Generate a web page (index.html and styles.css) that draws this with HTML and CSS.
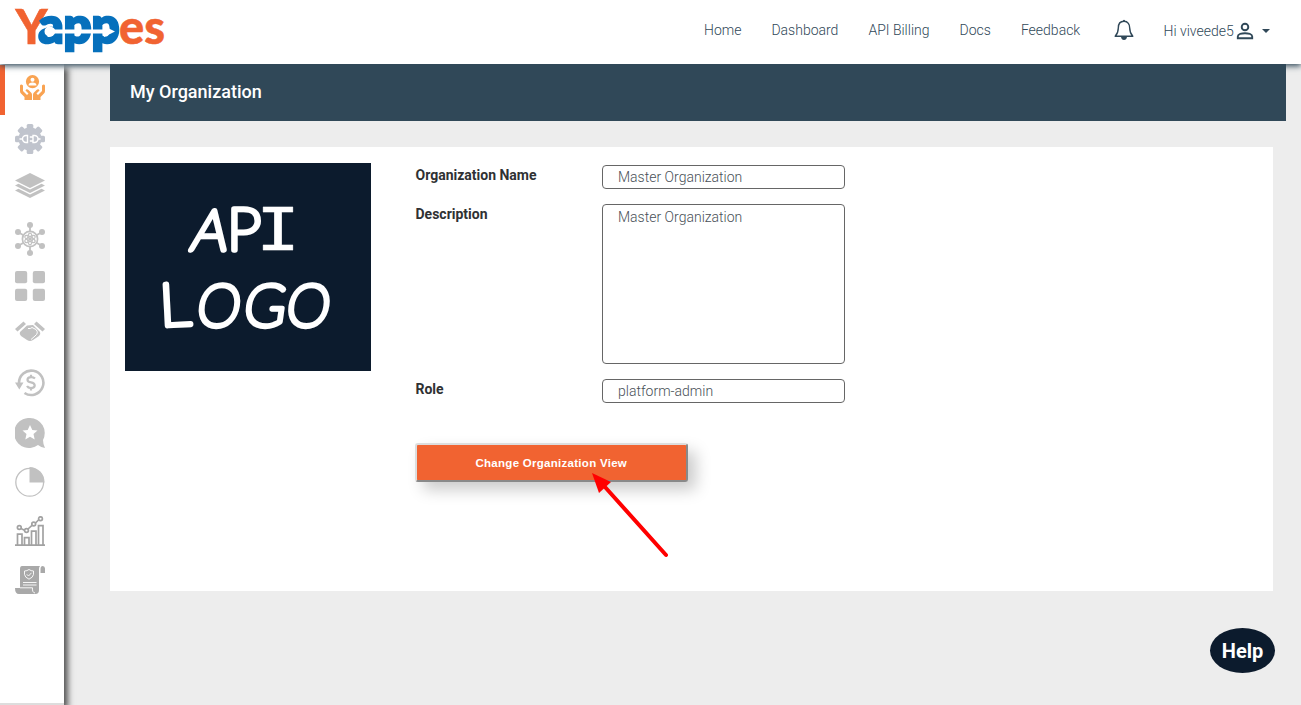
FILE: index.html
```html
<!DOCTYPE html>
<html lang="en">
<head>
<meta charset="utf-8">
<title>Yappes - My Organization</title>
<link rel="stylesheet" href="styles.css">
</head>
<body>
<header class="topbar">
  <a class="brand" aria-label="Yappes">
    <svg width="180" height="64" viewBox="0 0 180 64">
      <g class="brand-text">
        <text class="orange" x="15.500" y="43.500" font-size="48" textLength="32" lengthAdjust="spacingAndGlyphs">Y</text>
        <text class="blue" transform="translate(38.500 43) scale(1 1.060)" font-size="46" textLength="81" lengthAdjust="spacingAndGlyphs">app</text>
        <text class="orange" x="119" y="43.500" font-size="48" textLength="46" lengthAdjust="spacingAndGlyphs">es</text>
      </g>
      <path d="M55 29.500H104V26L115 31.500L104 37V33.500H55Q53 36.500 49.500 36.500A5 5 0 0 1 49.500 26.500Q53 26.500 55 29.500Z" fill="#fff"/>
    </svg>
  </a>
  <nav class="nav">
    <a>Home</a><a>Dashboard</a><a>API Billing</a><a>Docs</a><a>Feedback</a>
  </nav>
  <svg class="bell" width="20" height="22" viewBox="0 0 20 22">
    <path d="M10 2.300C6 2.300 4.300 5.500 4.300 9C4.300 13.500 3.300 15 1.200 17.300H18.800C16.700 15 15.700 13.500 15.700 9C15.700 5.500 14 2.300 10 2.300Z" fill="none" stroke="#304858" stroke-width="1.400" stroke-linejoin="round"/>
    <path d="M9 1.500Q10 .2 11 1.500V3H9ZM7 18H13Q12.500 21 10 21Q7.500 21 7 18Z" fill="#304858"/>
  </svg>
  <div class="user">
    <span>Hi viveede5</span>
    <svg width="18" height="18" viewBox="0 0 18 18" fill="none" stroke="#304858" stroke-width="1.900"><circle cx="9" cy="5" r="3.300"/><path d="M1.800 16.200V14.500C1.800 12.200 6 11.200 9 11.200S16.200 12.200 16.200 14.500V16.200Z"/></svg>
    <i class="caret"></i>
  </div>
</header>
<div class="layout">
  <aside class="sidebar">
    <ul class="menu">
      <li class="active"><svg width="30" height="34" viewBox="0 0 30 34" fill="#f9a352"><path fill-rule="evenodd" d="M17.500 0A6.600 6.600 0 1 1 17.500 13.200A6.600 6.600 0 0 1 17.500 0ZM17.500 2.800A2 2 0 0 0 17.500 6.800A2 2 0 0 0 17.500 2.800ZM13.500 10.500H21.500Q21.500 7.500 17.500 7.500T13.500 10.500Z"/><path d="M5 10.500Q6 8.500 8 10.500V16L12 20L13.500 18.500L10.500 15.500Q11.500 13.500 13.500 15L16.500 18Q17 19 17 20V25H9.500V22L6 18.500Q5 17.500 5 16ZM30 10.500Q29 8.500 27 10.500V16L23 20L21.500 18.500L24.500 15.500Q23.500 13.500 21.500 15L18.500 18Q18 19 18 20V25H25.500V22L29 18.500Q30 17.500 30 16Z"/></svg></li>
      <li><svg width="30" height="34" viewBox="0 0 30 34"><g fill="#c0c4cd"><circle cx="15" cy="15" r="11.500"/><rect x="11.700" width="6.600" height="30" rx="1.500"/><rect x="11.700" width="6.600" height="30" rx="1.500" transform="rotate(45 15 15)"/><rect x="11.700" width="6.600" height="30" rx="1.500" transform="rotate(90 15 15)"/><rect x="11.700" width="6.600" height="30" rx="1.500" transform="rotate(135 15 15)"/></g><path d="M4.500 15H7.500M12.500 11.500H11A3.500 3.500 0 0 0 11 18.500H12.500ZM14.800 13H17.500M14.800 17H17.500M18 11.500H19.500A3.500 3.500 0 0 1 19.500 18.500H18ZM23 15H25.500" stroke="#fff" stroke-width="1.400" fill="none"/></svg></li>
      <li><svg width="30" height="34" viewBox="0 0 30 34" fill="#c1c1c1"><path d="M15 0L30 7.500L15 15L0 7.500Z"/><path d="M0 12.500L3.500 10.800L15 16.500L26.500 10.800L30 12.500L15 20Z"/><path d="M0 17.500L3.500 15.800L15 21.500L26.500 15.800L30 17.500L15 25Z"/></svg></li>
      <li><svg width="30" height="34" viewBox="0 0 30 34" fill="none" stroke="#c1c1c1"><path d="M15 2V9M15 25V32M3 10L8.500 13.300M27 10L21.500 13.300M3 24L8.500 20.700M27 24L21.500 20.700" stroke-width="1.800"/><circle cx="15" cy="17" r="7.600" stroke-width="1.700"/><g stroke-width="1.200"><ellipse cx="15" cy="17" rx="2.200" ry="5.800"/><ellipse cx="15" cy="17" rx="2.200" ry="5.800" transform="rotate(60 15 17)"/><ellipse cx="15" cy="17" rx="2.200" ry="5.800" transform="rotate(120 15 17)"/></g><g fill="#c1c1c1" stroke="none"><circle cx="15" cy="17" r="1.700"/><circle cx="15" cy="3" r="3"/><circle cx="15" cy="31" r="3"/><circle cx="3" cy="10" r="3"/><circle cx="27" cy="10" r="3"/><circle cx="3" cy="24" r="3"/><circle cx="27" cy="24" r="3"/></g></svg></li>
      <li><svg width="30" height="34" viewBox="0 0 30 34" fill="#c1c1c1"><rect width="12.200" height="12.200" rx="2"/><rect x="17.800" width="12.200" height="12.200" rx="2"/><rect y="17.800" width="12.200" height="12.200" rx="2"/><rect x="17.800" y="17.800" width="12.200" height="12.200" rx="2"/></svg></li>
      <li><svg width="30" height="34" viewBox="0 0 30 34"><g fill="#c1c1c1"><path d="M0 9L8.500 1.500L11 4L2.500 11.500ZM30 9L21.500 1.500L19 4L27.500 11.500Z"/><path d="M5 12L12 5.500L18 5L25 12Q26 14 24 16L18 20Q15 22 12 20L6 16Q4 14 5 12Z"/></g><path d="M13 8.500Q15.500 9 17 7.500L21 9.500Q24 13 20 16L16 19.500" fill="none" stroke="#fff" stroke-width="1"/></svg></li>
      <li><svg width="30" height="34" viewBox="0 0 30 34"><path d="M4 14A12.200 12.200 0 1 1 9.500 24" fill="none" stroke="#c1c1c1" stroke-width="2.600"/><path d="M0 13.500H8.500L4.300 20.500Z" fill="#c1c1c1"/><path d="M20 9.500Q18.500 8 16 8.100Q12.500 8.300 12.500 10.700Q12.500 13 16 13.400Q19.700 14 19.700 16.600Q19.500 19 16 19.100Q13 19 12 17M16 5.800V8.200M16 19V21.500" fill="none" stroke="#c1c1c1" stroke-width="2.200"/></svg></li>
      <li><svg width="30" height="34" viewBox="0 0 30 34"><path d="M15 0A15 15 0 0 1 28 22Q28 26 30 30Q26 29.500 23 27A15 15 0 1 1 15 0Z" fill="#c1c1c1"/><path d="M15 7L17.300 12L22.500 12.500L18.500 16L19.700 21.500L15 18.700L10.300 21.500L11.500 16L7.500 12.500L12.700 12Z" fill="#fff"/></svg></li>
      <li><svg width="30" height="34" viewBox="0 0 30 34"><circle cx="14.700" cy="15.300" r="13.900" fill="none" stroke="#c1c1c1" stroke-width="1.300"/><path d="M14.500 0A15 15 0 0 1 29.500 15.500H14.500Z" fill="#c1c1c1"/></svg></li>
      <li><svg width="30" height="34" viewBox="0 0 30 34" fill="none" stroke="#a2a2a2" stroke-width="1.700"><path d="M0 29.200H30M2.500 29V18.200H7V29M9.500 29V21.700H14V29M16.500 29V15.200H21V29M23.500 29V9.700H28V29"/><path d="M6 12.500L9.500 14.300M13 13L17 9.300M20.500 7L23.500 4"/><circle cx="4.300" cy="11.500" r="1.900"/><circle cx="11.500" cy="14.500" r="1.900"/><circle cx="18.700" cy="8" r="1.900"/><circle cx="25.500" cy="2.700" r="1.900"/></svg></li>
      <li><svg width="30" height="34" viewBox="0 -1 30 34"><path d="M7 0H25Q24 1 24 3V24Q24 28 20.500 28H4Q0 28 0 22H5V3Q5 0 7 0ZM25.500 7V3Q25.500 0 27.800 0T30 3V7Z" fill="#a9a9a9"/><path d="M5 21.800H17.500Q17 26.500 20 27M8 16.500H21.500M8 19H21.500M14 3.500Q16 5 18.500 5V8.500Q18 11.500 14 13.200Q10 11.500 9.500 8.500V5Q12 5 14 3.500ZM11.800 8.300L13.500 10L16.500 6.800" fill="none" stroke="#fff" stroke-width=".9"/></svg></li>
    </ul>
  </aside>
  <main class="content">
    <h1 class="page-title">My Organization</h1>
    <section class="card">
      <svg class="org-logo" width="246" height="208" viewBox="0 0 246 208">
        <rect width="246" height="208" fill="#0c1b2d"/>
        <g class="logo-text">
          <text transform="translate(64.500 86.500) skewX(-10)" font-size="56">A</text>
          <text transform="translate(102 86.500) scale(1.050 1)" font-size="58">P</text>
          <text class="mono" transform="translate(131 87) scale(1.130 1)" font-size="65">I</text>
          <text transform="translate(35.500 163) rotate(-3) scale(1.050 1)" font-size="59">L</text>
          <text transform="translate(70 163) skewX(-8) scale(.95 1)" font-size="58">O</text>
          <text transform="translate(117 163) skewX(-8) scale(.97 1)" font-size="58">G</text>
          <text transform="translate(159.500 163) skewX(-8) scale(.95 1)" font-size="58">O</text>
        </g>
      </svg>
      <div class="form">
        <label for="name">Organization Name</label>
        <input id="name" class="field" value="Master Organization">
        <label for="desc">Description</label>
        <textarea id="desc" class="field area">Master Organization</textarea>
        <label for="role">Role</label>
        <input id="role" class="field" value="platform-admin">
        <div class="action">
          <button class="change">Change Organization View</button>
          <svg class="pointer" width="80" height="90" viewBox="0 0 80 90"><path d="M13 14L74 82" stroke="#f00" stroke-width="4" stroke-linecap="round"/><path d="M0 0L19 9L7 20Z" fill="#f00"/></svg>
        </div>
      </div>
    </section>
  </main>
</div>
<button class="help">Help</button>
</body>
</html>
```
FILE: styles.css
```css
* { box-sizing: border-box; }
body { margin: 0; height: 705px; overflow: hidden; background: #ededed; font-family: Roboto, sans-serif; color: #304858; }
.topbar { position: relative; z-index: 2; display: flex; height: 64px; background: #fff; box-shadow: 0 2px 6px #304858; }
.brand { width: 704px; height: 64px; }
.brand-text { font-family: Lato, sans-serif; font-weight: 900; }
.orange { fill: #f16331; stroke: #f16331; stroke-width: .5; }
.blue { fill: #0670bc; stroke: #0670bc; stroke-width: 2.500; }
.nav { display: flex; gap: 30px; width: 409.500px; padding-top: 20px; font-size: 14px; font-weight: 300; line-height: 20px; white-space: nowrap; }
.bell { margin-top: 19px; }
.user { display: flex; align-items: center; height: 20px; margin: 21px 0 0 30px; font-size: 14px; font-weight: 300; white-space: nowrap; }
.user svg { margin-left: 2.500px; }
.caret { margin-left: 8px; border: 4px solid transparent; border-top-color: #304858; border-bottom: 0; }
.layout { display: flex; height: 641px; }
.sidebar { position: relative; z-index: 1; width: 64px; height: 641px; background: #fff; border-bottom: 2px solid #ddd; box-shadow: 4px 4px 6px #555; }
.menu { margin: 0; padding: 1px 0 0; list-style: none; }
.menu li { height: 49px; padding-left: 15px; }
.menu li.active { height: 50px; margin-bottom: 9px; padding: 10px 0 0 10px; border-left: 5px solid #f16331; }
.menu svg { display: block; }
.content { position: relative; z-index: 3; width: 1176px; margin-left: 46px; }
.page-title { margin: 0 0 26px; height: 57px; padding-left: 20px; background: #304858; color: #fff; font-size: 18px; font-weight: 500; line-height: 55px; }
.card { display: flex; width: 1163px; height: 444px; padding: 16px 15px; background: #fff; }
.org-logo { flex: none; }
.logo-text { font-family: Lato, sans-serif; font-weight: 100; fill: #fff; stroke: #fff; stroke-width: 5.500; stroke-linejoin: round; }
.mono { font-family: "Liberation Mono", monospace; font-weight: 400; stroke-width: .6; }
.form { display: grid; grid-template-columns: 186.500px 243px; grid-template-rows: 24px 160px 24px 39px; row-gap: 15px; align-content: start; margin: 2px 0 0 44.500px; }
.form label { color: #2f3133; font-size: 14px; font-weight: 700; line-height: 20px; }
.field { width: 243px; height: 24px; margin: 0; padding: 0 15px; border: 1px solid #666; border-radius: 4px; background: #fff; color: #495057; font: 300 14px/22px Roboto, sans-serif; outline: 0; }
.area { height: 160px; padding-top: 1px; resize: none; }
.action { position: relative; grid-column: 1 / 3; width: 273px; margin-top: 25px; margin-left: -.5px; }
.change { display: block; width: 272.500px; height: 39px; padding: 0; border: 2px outset #ddd; border-radius: 3px; background: #f16331; color: #fff; font: bold 11.500px "Liberation Sans", sans-serif; letter-spacing: .28px; box-shadow: 8px 8px 15px #ccc; }
.pointer { position: absolute; left: 177px; top: 30px; }
.help { position: absolute; z-index: 4; left: 1210px; top: 628px; width: 65px; height: 45px; padding: 0; border: 0; border-radius: 50%; background: #0c1b2d; color: #fff; font: 700 20px Roboto, sans-serif; }
```
